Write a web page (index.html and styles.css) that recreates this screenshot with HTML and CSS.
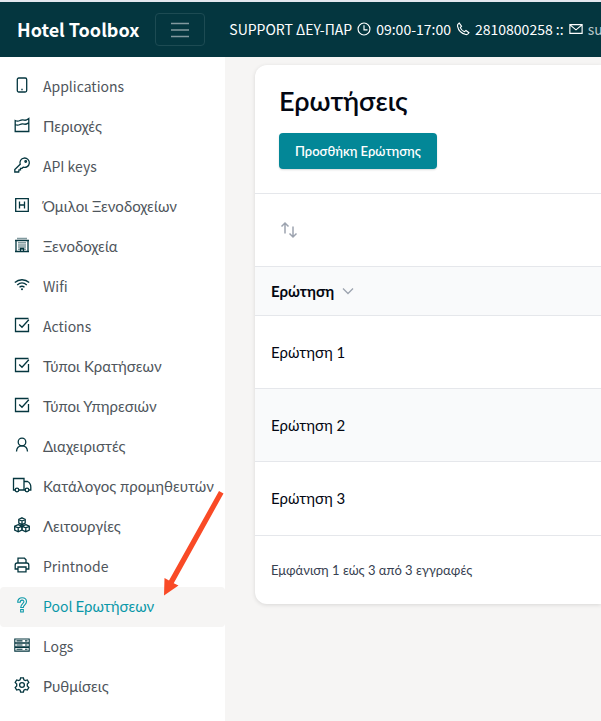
FILE: index.html
```html
<!DOCTYPE html>
<html lang="el">
<head>
<meta charset="utf-8">
<meta name="viewport" content="width=device-width, initial-scale=1">
<title>Hotel Toolbox</title>
<link rel="stylesheet" href="styles.css">
</head>
<body>
<header class="topbar">
  <a class="brand" href="#">Hotel Toolbox</a>
  <button class="toggler" type="button" aria-label="Menu">
    <svg class="toggler-icon" viewBox="0 0 20 20"><path d="M1 3.500h18M1 10h18M1 16.500h18"/></svg>
  </button>
  <p class="support">
    <span>SUPPORT ΔΕΥ-ΠΑΡ</span>
    <svg class="mini" viewBox="0 0 16 16"><circle cx="8" cy="8" r="6.800"/><path d="M8 3.600V9h4"/></svg>
    <span>09:00-17:00</span>
    <svg class="mini" viewBox="0 0 16 16"><path d="M3.700 1.200C2.500 1.900 1.400 3.200 1.700 4.800c1 4.700 4.800 8.500 9.500 9.500 1.600.3 2.900-.8 3.600-2l-3.400-2.500-1.800 1.300C7.700 10.300 5.700 8.300 4.900 6.400L6.300 4.700z"/></svg>
    <span>2810800258 ::</span>
    <svg class="mini" viewBox="0 0 16 16"><path d="M1 3h14v10H1zM1.500 3.500 8 9l6.500-5.500"/></svg>
    <a class="mail" href="#">support</a>
  </p>
</header>
<div class="layout">
  <nav class="sidebar" aria-label="Κύριο μενού">
    <a class="item" href="#"><svg class="icon" viewBox="0 0 16 16"><rect x="3.300" y="1" width="9.400" height="14" rx="1.500"/><path d="M7.300 12.500h1.400"/></svg><span>Applications</span></a>
    <a class="item" href="#"><svg class="icon" viewBox="0 0 16 16"><path d="M1.200 3.500c2 1 3.300.8 4.800 0s3-.6 4.500-.3S13.500 2.500 14.800 1.500v13H1.200zM1.200 7.500c2 1 3.300.8 4.800 0s3-.6 4.500-.3 3-.7 4.300-1.500"/></svg><span class="el">Περιοχές</span></a>
    <a class="item" href="#"><svg class="icon" viewBox="0 0 16 16"><path d="M6.200 7.300A4.700 4.700 0 1 1 9.200 10.200L8 11.300H6.500v1.500H5L4.700 15H.8v-2.500z"/><circle cx="11.700" cy="4.500" r=".8"/></svg><span>API keys</span></a>
    <a class="item" href="#"><svg class="icon" viewBox="0 0 16 16"><path d="M1.700 1.700h12.600v12.600H1.700zM5.500 4.500v7M10.500 4.500v7M5.500 8h5"/></svg><span class="el">Όμιλοι Ξενοδοχείων</span></a>
    <a class="item" href="#"><svg class="icon" viewBox="0 0 16 16"><path d="M2 3.500h12v11H2zM1 14.500h14M1 3.500h14M6.500 14v-2.500h3V14"/><path class="dots" d="M3.500 1.500h10M4.500 5.700h8M4.500 7.900h8M4.500 10.100h8M4.500 12.300h8"/></svg><span class="el">Ξενοδοχεία</span></a>
    <a class="item" href="#"><svg class="icon" viewBox="0 0 16 16"><path d="M.8 5.500C5 1.800 11 1.800 15.200 5.500M3.200 8c2.900-2.600 6.700-2.600 9.600 0M5.500 10.300c1.600-1.300 3.400-1.300 5 0"/><circle class="solid" cx="8" cy="12.300" r="1"/></svg><span>Wifi</span></a>
    <a class="item" href="#"><svg class="icon" viewBox="0 0 16 16"><path d="M14.500 1.500h-13v13h13V7M5.200 7.500 8 10.300l6.800-7.500"/></svg><span>Actions</span></a>
    <a class="item" href="#"><svg class="icon" viewBox="0 0 16 16"><path d="M14.500 1.500h-13v13h13V7M5.200 7.500 8 10.300l6.800-7.500"/></svg><span class="el">Τύποι Κρατήσεων</span></a>
    <a class="item" href="#"><svg class="icon" viewBox="0 0 16 16"><path d="M14.500 1.500h-13v13h13V7M5.200 7.500 8 10.300l6.800-7.500"/></svg><span class="el">Τύποι Υπηρεσιών</span></a>
    <a class="item" href="#"><svg class="icon" viewBox="0 0 16 16"><circle cx="8" cy="5" r="3.800"/><path d="M2.500 14.500c.2-3.500 2-5.700 5.500-5.700s5.300 2.200 5.500 5.700"/></svg><span class="el">Διαχειριστές</span></a>
    <a class="item" href="#"><svg class="icon" viewBox="0 0 20 16"><path d="M3 13H1.500V1.500H12V13H7M12 4.500h3.500c2 1 3.300 3 3.300 5.500v3H17M12 13h1"/><circle cx="5" cy="13" r="1.800"/><circle cx="15" cy="13" r="1.800"/></svg><span class="el">Κατάλογος προμηθευτών</span></a>
    <a class="item" href="#"><svg class="icon" viewBox="0 0 16 16"><path d="M8 .8l3.200 1.500v3.900L8 7.700 4.800 6.200V2.300zM4.800 2.500 8 4l3.200-1.500M8 4v3.500M4.200 7.700l3.600 1.500v4l-3.600 1.600L.7 13.200v-4zM.7 9.300l3.500 1.500 3.600-1.500M4.200 10.800v4M11.800 7.700l3.500 1.500v4l-3.500 1.600-3.600-1.600v-4zM8.200 9.300l3.600 1.500 3.500-1.500M11.800 10.800v4"/></svg><span class="el">Λειτουργίες</span></a>
    <a class="item" href="#"><svg class="icon" viewBox="0 0 16 16"><path d="M4 6V1.200h6.500L12 2.700V6M4 12H1.200V8c0-1.200.7-2 2-2h9.600c1.300 0 2 .8 2 2v4H12M4 10h8v4.800H4z"/></svg><span>Printnode</span></a>
    <a class="item active" href="#" aria-current="page"><svg class="icon fine" viewBox="0 0 16 16"><path d="M3.700 5.200C3.700 2.500 5.400.8 8.100.8s4.400 1.600 4.400 4c0 3-3.200 3.200-3.200 5.700H6.700c0-3.500 3.200-3.900 3.200-5.700 0-1-.7-1.700-1.800-1.700S6.200 3.800 6.200 5.200zM6.700 12.500h2.600V15H6.700z"/></svg><span>Pool <span class="el">Ερωτήσεων</span></span></a>
    <a class="item" href="#"><svg class="icon fine" viewBox="0 0 16 16"><path d="M.8 2h14.400v3.700H.8zM.8 6.200h14.400v3.700H.8zM.8 10.400h14.400v3.700H.8zM2.500 3.900h6M2.500 8h6M2.500 12.300h6M11 3.900h2.500M11 8h2.500M11 12.300h2.500"/></svg><span>Logs</span></a>
    <a class="item" href="#"><svg class="icon" viewBox="0 0 16 16"><path d="M6.600.8h2.800l.5 2 1.400.8 2-.6 1.500 2.500-1.500 1.500v2l1.500 1.500-1.500 2.500-2-.6-1.400.8-.5 2H6.600l-.5-2-1.400-.8-2 .6-1.500-2.500L2.700 9V7L1.200 5.500 2.700 3l2 .6 1.400-.8z"/><circle cx="8" cy="8" r="2.400"/></svg><span class="el">Ρυθμίσεις</span></a>
    <svg class="pointer" viewBox="0 0 62 106"><path d="M57 1 61.500 3.500 11.700 93.200 16.500 95.500 2 105.500 2.500 88 7 90.500z"/></svg>
  </nav>
  <main class="content">
    <section class="card">
      <div class="card-head">
        <h1 class="title">Ερωτήσεις</h1>
        <button class="primary" type="button">Προσθήκη Ερώτησης</button>
      </div>
      <div class="tools">
        <button class="sort" type="button" aria-label="Αναδιάταξη">
          <svg class="sort-icon" viewBox="0 0 20 20"><path d="M6 13.500V3M2.500 6.500 6 3l3.500 3.500M14 6.500V17M10.500 13.500 14 17l3.500-3.500"/></svg>
        </button>
      </div>
      <table class="grid">
        <thead>
          <tr><th scope="col"><span class="th-label">Ερώτηση <svg class="chevron" viewBox="0 0 12 12"><path d="M1 3.500 6 8.500l5-5"/></svg></span></th></tr>
        </thead>
        <tbody>
          <tr><td>Ερώτηση 1</td></tr>
          <tr><td>Ερώτηση 2</td></tr>
          <tr><td>Ερώτηση 3</td></tr>
        </tbody>
      </table>
      <p class="summary">Εμφάνιση 1 εώς 3 από 3 εγγραφές</p>
    </section>
  </main>
</div>
</body>
</html>
```
FILE: styles.css
```css
* { box-sizing: border-box; }

body {
  margin: 0;
  min-height: 100vh;
  display: flex;
  flex-direction: column;
  overflow-x: hidden;
  background: #f6f5f4;
  color: #030712;
  font-family: "Noto Sans CJK JP", "Noto Sans", sans-serif;
  font-size: 14px;
  line-height: 24px;
}

svg { fill: none; stroke: currentColor; stroke-width: 1.3; flex: none; }
a { color: inherit; text-decoration: none; }
p, h1 { margin: 0; }
button { font: inherit; }

.el, .card { font-family: Lato, "Noto Sans", sans-serif; font-size: 15px; }

.topbar {
  display: flex;
  align-items: center;
  height: 57px;
  padding: 0 0 2px 17px;
  border-top: 2px solid #e4e8ef;
  background: #04363f;
  color: #fff;
  white-space: nowrap;
  overflow: hidden;
}
.brand { font-size: 18px; font-weight: 700; }
.toggler {
  display: flex;
  align-items: center;
  justify-content: center;
  flex: none;
  width: 50px;
  height: 33px;
  margin: 2px 24px 0 16px;
  padding: 0;
  border: 1px solid #1d4b53;
  border-radius: 4px;
  background: none;
  color: #82999e;
}
.toggler-icon { width: 20px; height: 20px; }
.support { display: flex; align-items: center; gap: 5px; }
.mini { width: 14px; height: 14px; }
.mail { color: #b4c3c6; }

.layout { display: flex; flex: 1; }
.sidebar {
  position: relative;
  flex: none;
  width: 225px;
  padding-top: 10px;
  background: #fff;
}
.item {
  display: flex;
  align-items: center;
  gap: 11px;
  height: 40px;
  padding: 0 0 2px 12px;
  border-radius: 4px;
  color: #4f565c;
  white-space: nowrap;
}
.icon { width: 20px; height: 16px; margin-bottom: 2px; color: #04363f; }
.fine { stroke-width: 1.1; }
.dots { stroke-dasharray: 1 1; stroke-width: 1.5; }
.solid { fill: currentColor; stroke: none; }
.active { background: #f6f5f4; color: #0a98a8; }
.active .icon { color: #0a98a8; }
.pointer {
  position: absolute;
  top: 433px;
  left: 162px;
  width: 62px;
  height: 106px;
  fill: #f94a26;
  stroke: none;
}

.content { flex: 1; min-width: 0; padding: 8px 0 0 30px; }
.card {
  border-radius: 12px 0 0 12px;
  background: #fff;
  box-shadow: 0 1px 4px rgba(0, 0, 0, .12);
  overflow: hidden;
}
.card-head { padding: 20px 24px 24px; border-bottom: 1px solid #e5e7eb; }
.title { margin-bottom: 16px; font-size: 27px; line-height: 32px; font-weight: 600; }
.primary {
  display: block;
  height: 36px;
  padding: 0 16px;
  border: 0;
  border-radius: 4px;
  background: #038797;
  box-shadow: 0 1px 2px rgba(0, 0, 0, .15);
  color: #fff;
  font-size: 13px;
  font-weight: 600;
}
.tools { padding: 26px 24px; }
.sort { display: block; padding: 0; border: 0; background: none; color: #9ca3af; }
.sort-icon { display: block; width: 20px; height: 20px; stroke-width: 1.5; }

.grid { width: 100%; border-collapse: collapse; }
.grid th, .grid td { padding: 0 16px; border-top: 1px solid #e5e7eb; text-align: left; }
.grid th { height: 49px; background: #f9fafb; font-weight: 700; }
.grid td { height: 73px; }
.grid tbody tr:nth-child(even) { background: #f9fafb; }
.th-label { display: flex; align-items: center; gap: 8px; }
.chevron { width: 12px; height: 12px; color: #9ca3af; }
.summary {
  padding: 22px 16px;
  border-top: 1px solid #e5e7eb;
  color: #374151;
  font-size: 13px;
}
```
